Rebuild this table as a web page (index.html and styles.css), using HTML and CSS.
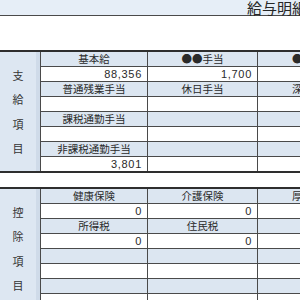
FILE: index.html
```html
<!DOCTYPE html>
<html lang="ja">
<head>
<meta charset="utf-8">
<link rel="stylesheet" href="styles.css">
</head>
<body>
<div class="page">
  <header class="title-bar"><h1 class="title">給与明細書</h1></header>
  <div class="spacer"></div>

  <section class="tbl">
    <div class="lab"><span>支</span><span>給</span><span>項</span><span>目</span></div>
    <div class="h">基本給</div><div class="h">●●手当</div><div class="h">●●手当</div>
    <div class="v">88,356</div><div class="v">1,700</div><div class="v"></div>
    <div class="h">普通残業手当</div><div class="h">休日手当</div><div class="h">深夜手当</div>
    <div class="v"></div><div class="v"></div><div class="v"></div>
    <div class="h">課税通勤手当</div><div class="h"></div><div class="h"></div>
    <div class="v"></div><div class="v"></div><div class="v"></div>
    <div class="h">非課税通勤手当</div><div class="h"></div><div class="h"></div>
    <div class="v">3,801</div><div class="v"></div><div class="v"></div>
  </section>

  <section class="tbl tbl-2">
    <div class="lab"><span>控</span><span>除</span><span>項</span><span>目</span></div>
    <div class="h">健康保険</div><div class="h">介護保険</div><div class="h">厚生年金</div>
    <div class="v">0</div><div class="v">0</div><div class="v">0</div>
    <div class="h">所得税</div><div class="h">住民税</div><div class="h"></div>
    <div class="v">0</div><div class="v">0</div><div class="v"></div>
    <div class="h"></div><div class="h"></div><div class="h"></div>
    <div class="v"></div><div class="v"></div><div class="v"></div>
    <div class="h"></div><div class="h"></div><div class="h"></div>
    <div class="v"></div><div class="v"></div><div class="v"></div>
  </section>
</div>
</body>
</html>
```

FILE: styles.css
```css
html, body {
  margin: 0;
  padding: 0;
  background: #ffffff;
}
body {
  width: 300px;
  height: 300px;
  overflow: hidden;
  font-family: "Noto Sans CJK JP", "Liberation Sans", sans-serif;
  color: #2a2a2a;
}
.page {
  width: 367px;
}
.title-bar {
  height: 15px;
  background: #e6eef7;
  border-bottom: 1px solid #4a4a4a;
  display: flex;
  justify-content: flex-start;
  padding-left: 247px;
}
.title {
  margin: 0;
  font-size: 15px;
  font-weight: normal;
  line-height: 15px;
  white-space: nowrap;
  color: #262626;
}
.spacer {
  height: 34px;
}
.tbl {
  display: grid;
  grid-template-columns: 40px 106px 109px 110px;
  grid-template-rows: repeat(8, 14px);
  gap: 1px;
  background: #4a4a4a;
  border-top: 2px solid #2e2e2e;
  border-bottom: 2px solid #2e2e2e;
}
.tbl-2 {
  margin-top: 14px;
}
.lab {
  grid-row: 1 / span 8;
  background: #dde7f2;
  box-shadow: inset -4px 0 0 #cfdbe9;
  display: flex;
  flex-direction: column;
  align-items: center;
  justify-content: center;
  padding-right: 4px;
  font-size: 11px;
  line-height: 24.5px;
  color: #333;
}
.h {
  background: #dce6f1;
  font-size: 10.5px;
  line-height: 14px;
  text-align: center;
  white-space: nowrap;
  overflow: hidden;
}
.v {
  background: #ffffff;
  font-family: "Liberation Sans", sans-serif;
  font-size: 11px;
  letter-spacing: 0.7px;
  line-height: 14px;
  text-align: right;
  padding-right: 5px;
  white-space: nowrap;
}
```
